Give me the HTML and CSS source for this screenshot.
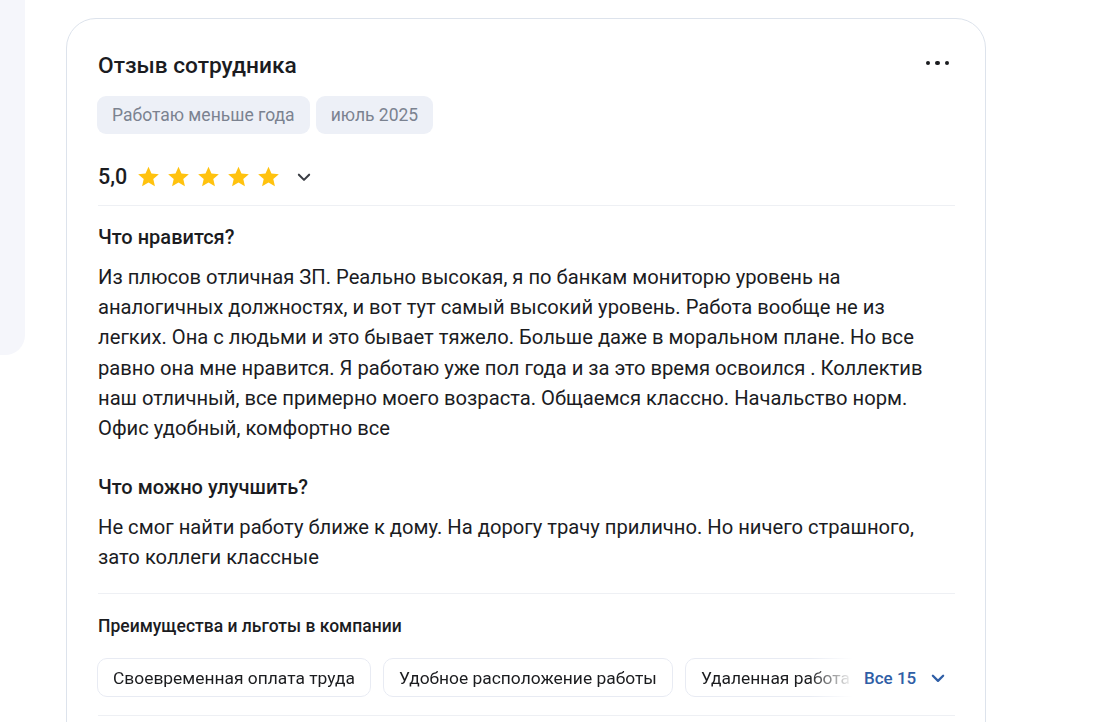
FILE: index.html
```html
<!DOCTYPE html>
<html lang="ru">
<head>
<meta charset="utf-8">
<link rel="stylesheet" href="styles.css">
</head>
<body>
<div class="page">
  <aside class="side"></aside>
  <main class="card">
    <div class="head">
      <h2 class="title">Отзыв сотрудника</h2>
      <button class="more" aria-label="Ещё"><span></span><span></span><span></span></button>
    </div>
    <div class="tags">
      <span class="tag">Работаю меньше года</span>
      <span class="tag">июль 2025</span>
    </div>
    <div class="rating">
      <span class="score">5,0</span>
      <span class="stars">
        <svg viewBox="0 0 24 24" class="star"><path d="M12 1.8l3.1 7.1 7.7.7-5.8 5.1 1.7 7.6L12 18.3l-6.7 4 1.7-7.6-5.8-5.1 7.7-.7z"/></svg>
        <svg viewBox="0 0 24 24" class="star"><path d="M12 1.8l3.1 7.1 7.7.7-5.8 5.1 1.7 7.6L12 18.3l-6.7 4 1.7-7.6-5.8-5.1 7.7-.7z"/></svg>
        <svg viewBox="0 0 24 24" class="star"><path d="M12 1.8l3.1 7.1 7.7.7-5.8 5.1 1.7 7.6L12 18.3l-6.7 4 1.7-7.6-5.8-5.1 7.7-.7z"/></svg>
        <svg viewBox="0 0 24 24" class="star"><path d="M12 1.8l3.1 7.1 7.7.7-5.8 5.1 1.7 7.6L12 18.3l-6.7 4 1.7-7.6-5.8-5.1 7.7-.7z"/></svg>
        <svg viewBox="0 0 24 24" class="star"><path d="M12 1.8l3.1 7.1 7.7.7-5.8 5.1 1.7 7.6L12 18.3l-6.7 4 1.7-7.6-5.8-5.1 7.7-.7z"/></svg>
      </span>
      <svg class="chev" viewBox="0 0 14 14"><path d="M2.5 5l4.5 4.5L11.5 5" fill="none" stroke="#3a3d44" stroke-width="1.8" stroke-linecap="round" stroke-linejoin="round"/></svg>
    </div>
    <section class="block">
      <h3 class="q">Что нравится?</h3>
      <p class="text">Из плюсов отличная ЗП. Реально высокая, я по банкам мониторю уровень на аналогичных должностях, и вот тут самый высокий уровень. Работа вообще не из легких. Она с людьми и это бывает тяжело. Больше даже в моральном плане. Но все равно она мне нравится. Я работаю уже пол года и за это время освоился . Коллектив наш отличный, все примерно моего возраста. Общаемся классно. Начальство норм. Офис удобный, комфортно все</p>
      <h3 class="q q2">Что можно улучшить?</h3>
      <p class="text">Не смог найти работу ближе к дому. На дорогу трачу прилично. Но ничего страшного, зато коллеги классные</p>
    </section>
    <section class="perks">
      <h4 class="perks-title">Преимущества и льготы в компании</h4>
      <div class="perks-row">
        <div class="chips">
          <span class="chip">Своевременная оплата труда</span>
          <span class="chip">Удобное расположение работы</span>
          <span class="chip">Удаленная работа</span>
        </div>
        <button class="all">Все 15
          <svg viewBox="0 0 14 14"><path d="M2.5 5l4.5 4.5L11.5 5" fill="none" stroke="#2f5ea6" stroke-width="2" stroke-linecap="round" stroke-linejoin="round"/></svg>
        </button>
      </div>
    </section>
  </main>
</div>
</body>
</html>
```
FILE: styles.css
```css
* { box-sizing: border-box; }
html, body { margin: 0; padding: 0; background: #fff; }
body {
  font-family: Roboto, "Noto Sans", Arial, sans-serif;
  color: #1b1c1f;
  overflow: hidden;
  height: 722px;
}
.page {
  display: flex;
  align-items: flex-start;
  gap: 41px;
}
.side {
  width: 25px;
  height: 355px;
  background: #f5f6fb;
  border-bottom-right-radius: 20px;
  flex-shrink: 0;
}
.card {
  margin-top: 18px;
  width: 920px;
  height: 760px;
  border: 1px solid #dde3ec;
  border-radius: 30px;
  padding: 31px 30px 0 31px;
}
.head {
  display: flex;
  justify-content: space-between;
  align-items: center;
  height: 30px;
}
.title {
  margin: 0;
  font-size: 22.7px;
  font-weight: 500;
  letter-spacing: 0;
}
.more {
  border: 0;
  background: none;
  padding: 0;
  margin-right: 6px;
  margin-bottom: 4px;
  display: flex;
  gap: 5px;
  cursor: pointer;
}
.more span {
  width: 4.5px;
  height: 4.5px;
  border-radius: 50%;
  background: #1b1c1f;
  display: block;
}
.tags {
  display: flex;
  gap: 6px;
  margin-top: 16px;
  margin-left: -1px;
}
.tag {
  background: #edf0f7;
  color: #7b8290;
  font-size: 17.5px;
  height: 38px;
  line-height: 38px;
  padding: 0 15px;
  border-radius: 9px;
}
.rating {
  display: flex;
  align-items: center;
  height: 72px;
  padding-top: 13px;
  border-bottom: 1px solid #eef0f4;
}
.score {
  font-size: 21.5px;
  font-weight: 500;
  margin-right: 10px;
  padding-top: 1px;
}
.stars {
  display: flex;
  gap: 7px;
}
.star {
  width: 23px;
  height: 23px;
  fill: #ffc20e;
  display: block;
}
.chev {
  width: 16px;
  height: 16px;
  margin-left: 16px;
  margin-top: 2px;
}
.block {
  padding-top: 19px;
  padding-bottom: 20px;
  border-bottom: 1px solid #eef0f4;
}
.q {
  margin: 0;
  font-size: 20px;
  font-weight: 500;
  line-height: 24px;
}
.q2 { margin-top: 32px; }
.text {
  margin: 13px 0 0;
  font-size: 20.2px;
  line-height: 30.2px;
}
.perks {
  padding-top: 21px;
  padding-bottom: 18px;
  border-bottom: 1px solid #eef0f4;
}
.perks-title {
  margin: 0;
  font-size: 17.5px;
  font-weight: 500;
  line-height: 22px;
}
.perks-row {
  display: flex;
  align-items: center;
  margin-top: 21px;
}
.chips {
  display: flex;
  gap: 12px;
  width: 756px;
  margin-left: -1px;
  overflow: hidden;
  white-space: nowrap;
  -webkit-mask-image: linear-gradient(to right, #000 712px, transparent 756px);
  mask-image: linear-gradient(to right, #000 712px, transparent 756px);
}
.chip {
  border: 1px solid #e8ebf3;
  border-radius: 10px;
  height: 39px;
  line-height: 38px;
  padding: 0 15px;
  font-size: 17.4px;
  flex-shrink: 0;
}
.all {
  border: 0;
  background: none;
  padding: 0;
  margin-left: 11px;
  margin-top: 1px;
  display: flex;
  align-items: center;
  gap: 14px;
  color: #2f5ea6;
  font-family: inherit;
  font-size: 17px;
  font-weight: 500;
  cursor: pointer;
}
.all svg {
  width: 16px;
  height: 16px;
}
```
